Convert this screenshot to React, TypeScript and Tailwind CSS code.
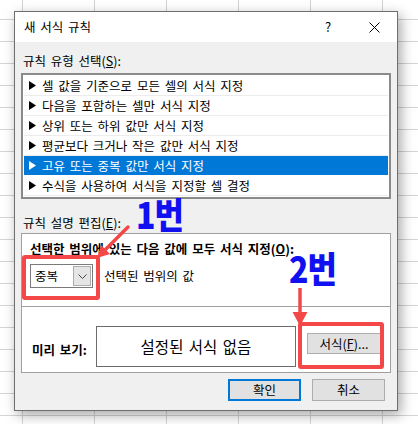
import React from 'react';

const listItems = [
    '셀 값을 기준으로 모든 셀의 서식 지정',
    '다음을 포함하는 셀만 서식 지정',
    '상위 또는 하위 값만 서식 지정',
    '평균보다 크거나 작은 값만 서식 지정',
    '고유 또는 중복 값만 서식 지정',
    '수식을 사용하여 서식을 지정할 셀 결정',
];

const Triangle = ({ color }: { color: string }) => (
    <svg width="7" height="9" viewBox="0 0 7 9" className="shrink-0">
        <path d="M0 0 L7 4.5 L0 9 Z" fill={color} />
    </svg>
);

export default function App() {
    return (
        <div className="relative w-[418px] h-[424px] overflow-hidden bg-white bg-[image:linear-gradient(to_right,#d4d4d4_1px,transparent_1px),linear-gradient(to_bottom,#d4d4d4_1px,transparent_1px)] bg-[size:72px_22px] bg-[position:22px_19px] pl-[14px] pt-[11px] font-['Noto_Sans_CJK_KR',sans-serif] text-[12.5px] [word-spacing:2px] text-black">
            {/* Dialog */}
            <div className="w-[384px] h-[400px] border border-[#6e6e6e] bg-[#f0f0f0] shadow-[3px_4px_12px_rgba(0,0,0,0.35)] flex flex-col">
                {/* Title bar */}
                <div className="h-[30px] bg-white flex items-center shrink-0">
                    <span className="pl-[9px] flex-1 leading-[16px]">새 서식 규칙</span>
                    <div className="w-[46px] h-full flex items-center justify-center text-[13px]">?</div>
                    <div className="w-[46px] h-full flex items-center justify-center">
                        <svg width="11" height="11" viewBox="0 0 11 11">
                            <path d="M0.5 0.5 L10.5 10.5 M10.5 0.5 L0.5 10.5" stroke="#000" strokeWidth="1" />
                        </svg>
                    </div>
                </div>

                {/* Body */}
                <div className="flex flex-col px-[6px]">
                    <div className="mt-[11px] h-[16px] leading-[16px] pl-[2px]">
                        규칙 유형 선택(<span className="underline">S</span>):
                    </div>

                    {/* Rule type list */}
                    <div className="mt-[4px] border-2 border-[#8a8a8a] bg-white p-[1px]">
                        {listItems.map((item, i) => {
                            const selected = i === 4;
                            return (
                                <div
                                    key={item}
                                    className={`h-[20px] border-b border-[#ececec] ${selected ? 'bg-[#0078d7] text-white border-b-white' : ''}`}
                                >
                                    <div className="h-[19px] flex items-center gap-[6px] pl-[5px] leading-[16px]">
                                        <Triangle color={selected ? '#fff' : '#000'} />
                                        <span>{item}</span>
                                    </div>
                                </div>
                            );
                        })}
                    </div>

                    <div className="mt-[16px] h-[16px] leading-[16px] pl-[2px]">
                        규칙 설명 편집(<span className="underline">E</span>):
                    </div>

                    {/* Rule description */}
                    <div className="mt-[2px] h-[140px] border border-[#a0a0a0] bg-white flex flex-col">
                        <div className="h-[72px] pl-[8px] pt-[7px]">
                            <div className="h-[16px] leading-[16px] font-bold">
                                선택한 범위에 있는 다음 값에 모두 서식 지정(<span className="underline">O</span>):
                            </div>
                            <div className="mt-[7px] flex items-center">
                                <div className="w-[63px] h-[24px] border border-[#7a7a7a] flex items-center p-[1px]">
                                    <span className="flex-1 pl-[3px] leading-[16px]">중복</span>
                                    <div className="w-[18px] h-full border border-[#adadad] bg-[#e5e5e5] flex items-center justify-center">
                                        <svg width="9" height="5" viewBox="0 0 9 5">
                                            <path d="M0.5 0.5 L4.5 4.5 L8.5 0.5" stroke="#444" strokeWidth="1" fill="none" />
                                        </svg>
                                    </div>
                                </div>
                                <span className="ml-[11px] leading-[16px]">선택된 범위의 값</span>
                            </div>
                        </div>
                        <div className="h-px bg-[#a0a0a0]" />
                        <div className="flex-1 flex items-start pl-[10px] pt-[19px]">
                            <span className="w-[64px] self-center font-bold leading-[16px] mt-[1px]">미리 보기:</span>
                            <div className="w-[200px] h-[41px] border border-[#6b6b6b] flex items-center justify-center text-[15.5px]">
                                설정된 서식 없음
                            </div>
                            <button className="ml-[11px] mt-[7px] w-[74px] h-[21px] border border-[#adadad] bg-[#e1e1e1] leading-[16px] [word-spacing:0px]">
                                서식(<span className="underline">F</span>)...
                            </button>
                        </div>
                    </div>

                    {/* Dialog buttons */}
                    <div className="mt-[6px] flex justify-end gap-[11px] pr-[6px]">
                        <button className="w-[73px] h-[22px] border-2 border-[#0078d7] bg-[#e1e1e1] leading-[16px]">확인</button>
                        <button className="w-[73px] h-[22px] border border-[#adadad] bg-[#e1e1e1] leading-[16px]">취소</button>
                    </div>
                </div>
            </div>

            {/* Annotations */}
            <div className="absolute left-[22px] top-[255px] w-[78px] h-[45px] border-4 border-[#f44848] rounded-[3px]" />
            <div className="absolute left-[298px] top-[322px] w-[86px] h-[47px] border-4 border-[#f44848] rounded-[3px]" />
            <svg className="absolute inset-0 pointer-events-none" width="418" height="424">
                <path d="M128 227 L105 250" stroke="#f44848" strokeWidth="3.5" strokeLinecap="round" />
                <path d="M97 258 L110 254 L101 245 Z" fill="#f44848" />
                <path d="M300 288 L300 314" stroke="#f44848" strokeWidth="3.5" />
                <path d="M292.5 312 L307.5 312 L300 326 Z" fill="#f44848" />
            </svg>
            <div className="absolute left-[136px] top-[197px] text-[32px] leading-[30px] font-black text-[#1010f0] tracking-[-1px] [word-spacing:0px] scale-y-[1.12] origin-top">1번</div>
            <div className="absolute left-[289px] top-[251px] text-[32px] leading-[30px] font-black text-[#1010f0] tracking-[-1px] [word-spacing:0px] scale-y-[1.12] origin-top">2번</div>
        </div>
    );
}
